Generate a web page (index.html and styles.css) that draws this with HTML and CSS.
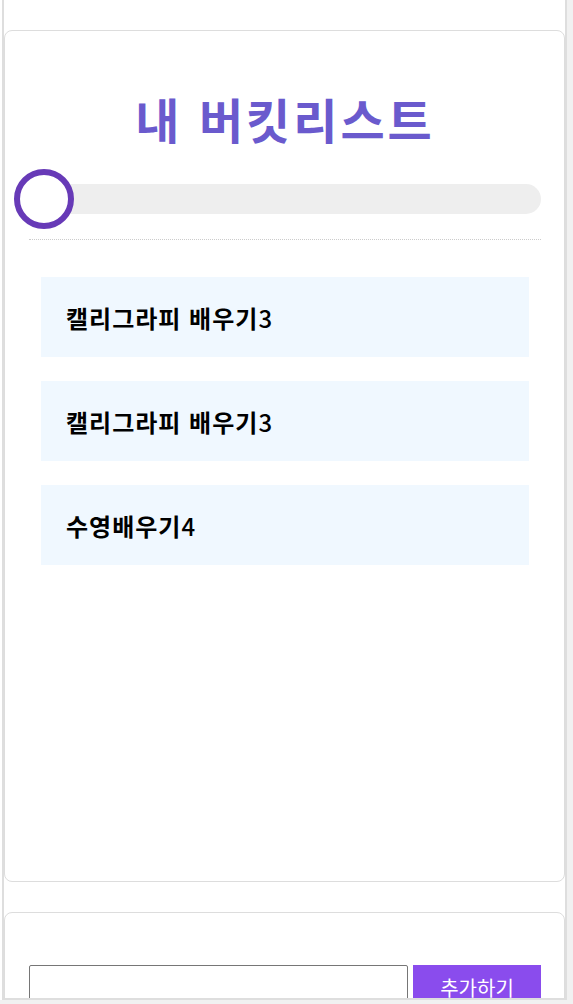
FILE: index.html
```html
<!DOCTYPE html>
<html lang="ko">
<head>
  <meta charset="UTF-8">
  <meta name="viewport" content="width=device-width, initial-scale=1.0">
  <title>내 버킷리스트</title>
  <link rel="stylesheet" href="styles.css">
</head>
<body>
  <div class="page">
    <div class="card bucket-card">
      <h1 class="title">내 버킷리스트</h1>

      <div class="progress">
        <div class="progress-fill" style="width: 0%"></div>
        <div class="progress-knob" style="left: 0%"></div>
      </div>

      <div class="divider"></div>

      <div class="bucket-list">
        <div class="bucket-item">캘리그라피 배우기<span class="item-num">3</span></div>
        <div class="bucket-item">캘리그라피 배우기<span class="item-num">3</span></div>
        <div class="bucket-item">수영배우기<span class="item-num">4</span></div>
      </div>
    </div>

    <div class="card input-card">
      <input type="text" class="bucket-input">
      <button class="add-btn">추가하기</button>
    </div>
  </div>
</body>
</html>
```

FILE: styles.css
```css
* {
  box-sizing: border-box;
}

html {
  background: #f1f1f1;
}

body {
  margin: 0;
  width: 567px;
  background: #fff;
  font-family: "Noto Sans CJK KR", "Noto Sans", sans-serif;
}

.page {
  margin-left: 2px;
  height: 1000px;
  border: 2px solid #dedede;
  border-top: none;
  overflow: hidden;
}

.card {
  margin-top: 30px;
  border: 1px solid #dddddd;
  border-radius: 8px;
  padding: 0 23px 0 24px;
  background: #fff;
}

.bucket-card {
  height: 852px;
}

.title {
  margin: 59px 0 0;
  font-size: 48px;
  line-height: 56px;
  font-weight: 700;
  letter-spacing: 3px;
  color: slateblue;
  text-align: center;
}

.progress {
  position: relative;
  margin: 38px 0 0 -15px;
  height: 30px;
  background: #eeeeee;
  border-radius: 15px;
}

.progress-fill {
  height: 100%;
  background: #673ab7;
  border-radius: 15px;
}

/* 진행도 표시 동그라미 */
.progress-knob {
  position: absolute;
  top: -15px;
  width: 60px;
  height: 60px;
  border: 6px solid #673ab7;
  border-radius: 50%;
  background: #fff;
}

.divider {
  margin-top: 25px;
  border-top: 1px dotted #cccccc;
}

.bucket-list {
  display: flex;
  flex-direction: column;
  gap: 24px;
  margin-top: 37px;
  padding: 0 12px;
}

.bucket-item {
  display: flex;
  align-items: center;
  height: 80px;
  padding: 0 25px;
  background: aliceblue;
  font-size: 24px;
  font-weight: 700;
  letter-spacing: 1px;
  color: #000;
}

.item-num {
  font-weight: 500;
}

.input-card {
  display: flex;
  gap: 5px;
  padding-top: 52px;
  height: 200px;
}

.bucket-input {
  flex: 1;
  height: 44px;
  border: 1px solid #767676;
  border-radius: 2px;
  font-size: 18px;
}

.add-btn {
  width: 128px;
  height: 44px;
  border: none;
  background: #8a4ced;
  color: #fff;
  font-family: inherit;
  font-size: 20px;
  cursor: pointer;
}
```
